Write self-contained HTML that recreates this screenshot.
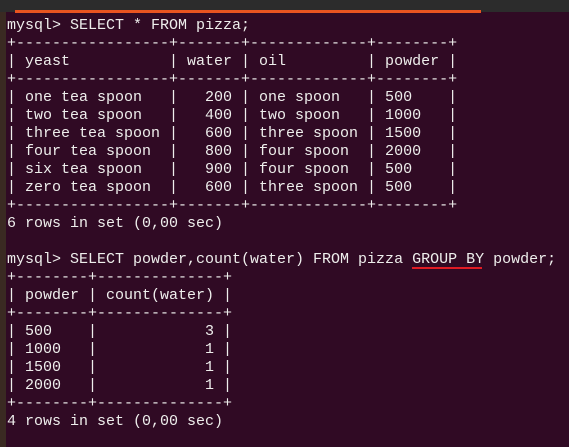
<!DOCTYPE html>
<html><head><meta charset="utf-8"><style>
html,body{margin:0;padding:0;width:569px;height:447px;overflow:hidden;background:#300a24;}
#top{position:absolute;left:0;top:0;width:569px;height:12px;background:#2c2c2c;}
#orange{position:absolute;left:15px;top:10px;width:466px;height:3px;background:#e95420;}
#left{position:absolute;left:0;top:12px;width:6px;height:435px;background:#3a2a22;}
pre{position:absolute;left:7px;top:17px;margin:0;font-family:"Liberation Mono",monospace;font-size:15px;line-height:18px;color:#eeeeec;}
#ul{position:absolute;left:412px;top:267px;width:70px;height:2px;background:#e01b24;}
</style></head><body>
<div id="top"></div><div id="orange"></div><div id="left"></div>
<pre>mysql&gt; SELECT * FROM pizza;
+-----------------+-------+-------------+--------+
| yeast           | water | oil         | powder |
+-----------------+-------+-------------+--------+
| one tea spoon   |   200 | one spoon   | 500    |
| two tea spoon   |   400 | two spoon   | 1000   |
| three tea spoon |   600 | three spoon | 1500   |
| four tea spoon  |   800 | four spoon  | 2000   |
| six tea spoon   |   900 | four spoon  | 500    |
| zero tea spoon  |   600 | three spoon | 500    |
+-----------------+-------+-------------+--------+
6 rows in set (0,00 sec)

mysql&gt; SELECT powder,count(water) FROM pizza GROUP BY powder;
+--------+--------------+
| powder | count(water) |
+--------+--------------+
| 500    |            3 |
| 1000   |            1 |
| 1500   |            1 |
| 2000   |            1 |
+--------+--------------+
4 rows in set (0,00 sec)</pre>
<div id="ul"></div>
</body></html>
